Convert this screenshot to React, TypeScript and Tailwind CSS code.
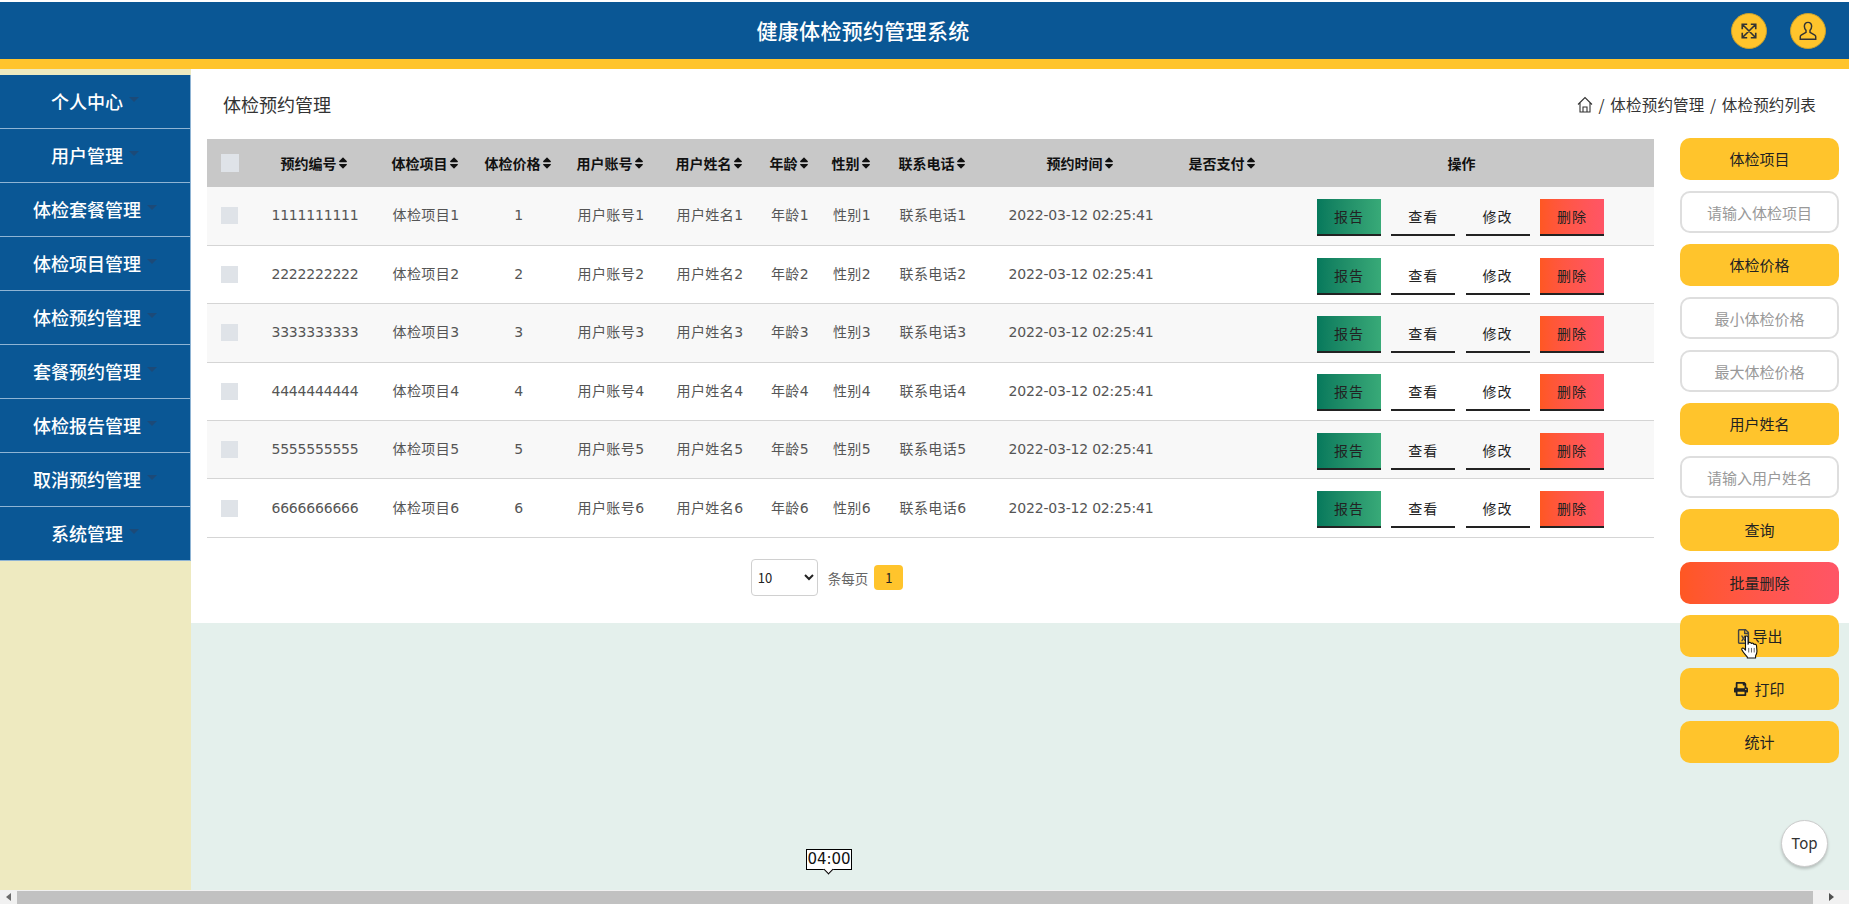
import { FaPrint, FaRegFileExcel, FaSort } from "react-icons/fa";

const menus = [
  "个人中心",
  "用户管理",
  "体检套餐管理",
  "体检项目管理",
  "体检预约管理",
  "套餐预约管理",
  "体检报告管理",
  "取消预约管理",
  "系统管理",
];

const columns = [
  { title: "预约编号", width: "w-[116px]" },
  { title: "体检项目", width: "w-[106px]" },
  { title: "体检价格", width: "w-[80px]" },
  { title: "用户账号", width: "w-[104px]" },
  { title: "用户姓名", width: "w-[94px]" },
  { title: "年龄", width: "w-[66px]" },
  { title: "性别", width: "w-[58px]" },
  { title: "联系电话", width: "w-[104px]" },
  { title: "预约时间", width: "w-[192px]" },
  { title: "是否支付", width: "w-[92px]" },
];

const rows = [1, 2, 3, 4, 5, 6];

const yellowBtn =
  "h-[42px] shrink-0 rounded-[10px] bg-[#ffc42c] flex items-center justify-center text-[15px] text-[#222]";
const fieldBtn =
  "h-[42px] shrink-0 w-full rounded-[10px] border-2 border-[#dedede] bg-white text-center text-[15px] text-[#333] placeholder:text-[#999] outline-none";

const ActionButtons = () => (
  <div className="flex gap-[10.3px] pl-[48px] pt-[3px] font-['Noto_Sans_CJK_SC',sans-serif] tracking-normal">
    <button className="w-[64px] h-[37px] bg-linear-to-r from-[#06795c] to-[#38aa78] border-b-2 border-[#222] text-[14px] tracking-[1px] text-[#222]">
      报告
    </button>
    <button className="w-[64px] h-[37px] border-b-2 border-[#222] text-[14px] tracking-[1px] text-[#222]">
      查看
    </button>
    <button className="w-[64px] h-[37px] border-b-2 border-[#222] text-[14px] tracking-[1px] text-[#222]">
      修改
    </button>
    <button className="w-[64px] h-[37px] bg-linear-to-r from-[#ff5722] to-[#ff5566] border-b-2 border-[#222] text-[14px] tracking-[1px] text-[#222]">
      删除
    </button>
  </div>
);

const Hand = () => (
  <svg width="22" height="26" viewBox="0 0 24 28" className="absolute left-[1549px] top-[565px]">
    <path
      d="M6 2.500c1-1 2.600-.6 2.800 1V11l.4-1.600c1.400-.9 2.800-.4 3 .8 1.300-.8 2.900-.3 3 1 1.300-.6 2.700 0 2.800 1.300l.5 6c0 2-.6 3.500-1.500 5v2.500H8V25c-1.500-2.300-4.500-4.800-6-8-.5-1.400.9-2.600 2.200-1.500L6 17.500z"
      fill="#fff"
      stroke="#111"
      strokeWidth="1.200"
      strokeLinejoin="round"
    />
    <path d="M9.500 15v5M12.500 15v5M15.500 15v5" stroke="#555" strokeWidth="1" />
  </svg>
);

const App = () => {
  return (
    <div className="w-[1849px] h-[904px] flex flex-col overflow-hidden bg-white font-['Noto_Sans_CJK_SC',sans-serif]">
      <header className="h-[67px] shrink-0 mt-[2px] bg-[#0a5795] border-b-[10px] border-[#ffc42c] flex items-center">
        <h1 className="flex-1 text-center pr-[5px] text-[21px] tracking-[0.3px] font-medium text-white">
          健康体检预约管理系统
        </h1>
        <div className="flex gap-[23px] pr-[23px]">
          <div className="size-[36px] rounded-full bg-[#ffc42c] border border-[#c9a02c] flex items-center justify-center">
            <svg width="18" height="18" viewBox="0 0 20 20" fill="none" stroke="#333" strokeWidth="1.800">
              <path d="M3 3l14 14M17 3L3 17M2.500 8V2.500H8M12 2.500h5.500V8M2.500 12v5.500H8M12 17.500h5.500V12" />
            </svg>
          </div>
          <div className="size-[36px] rounded-full bg-[#ffc42c] border border-[#c9a02c] flex items-center justify-center">
            <svg width="20" height="20" viewBox="0 0 20 22" fill="none" stroke="#333" strokeWidth="1.600">
              <path d="M10 1.500c-2.600 0-4 2-4 4.300 0 1.900.8 3.400 1.800 4.400v2.300L2.500 15.500c-.8.500-1 1-1 1.800V20h17v-2.700c0-.8-.2-1.300-1-1.800l-5.300-3v-2.300c1-1 1.800-2.500 1.800-4.400 0-2.300-1.400-4.300-4-4.300z" />
            </svg>
          </div>
        </div>
      </header>

      <div className="flex-1 flex min-h-0">
        <aside className="w-[191px] shrink-0 pt-[6px] bg-[#eeeac0]">
          <ul className="border-r border-[#8fb4d4]">
            {menus.map((name) => (
              <li
                key={name}
                className="h-[54px] bg-[#0a5795] border-b border-[#8fb4d4] flex items-center justify-center text-[18px] font-medium text-white"
              >
                <span>{name}</span>
                <span className="ml-[6px] mb-[4px] border-x-[5px] border-t-[5px] border-x-transparent border-t-[#1c4a78]" />
              </li>
            ))}
          </ul>
        </aside>

        <main className="flex-1 min-w-0 relative bg-[#e4f0ec]">
          <section className="h-[554px] bg-white pl-[16px] pr-[195px]">
            <div className="h-[70px] flex items-center pl-[16px]">
              <h2 className="text-[18px] text-[#333] font-normal">体检预约管理</h2>
            </div>
            <table className="w-[1447px] table-fixed border-collapse">
              <thead>
                <tr className="h-[48px] bg-[#c8c8c8]">
                  <th className="w-[50px] pl-[14px] text-left">
                    <div className="size-[18px] bg-[#dfe3e8]" />
                  </th>
                  {columns.map((col) => (
                    <th key={col.title} className={`${col.width} text-[14px] font-bold text-[#111]`}>
                      <span className="inline-flex items-center justify-center">
                        {col.title}
                        <FaSort size={14} className="-ml-[1px]" />
                      </span>
                    </th>
                  ))}
                  <th className="w-[385px] text-[14px] font-bold text-[#111]">操作</th>
                </tr>
              </thead>
              <tbody>
                {rows.map((n) => (
                  <tr
                    key={n}
                    className={`h-[58.4px] border-b border-[#d5d5d5] text-center text-[14px] tracking-[0.4px] text-[#555] font-['DejaVu_Sans','Noto_Sans_CJK_SC',sans-serif] ${
                      n % 2 === 1 ? "bg-[#f8f8f8]" : "bg-white"
                    }`}
                  >
                    <td className="pl-[14px]">
                      <div className="size-[17px] bg-[#dfe3e8]" />
                    </td>
                    <td className="tracking-[-0.2px]">{String(n).repeat(10)}</td>
                    <td>体检项目{n}</td>
                    <td>{n}</td>
                    <td>用户账号{n}</td>
                    <td>用户姓名{n}</td>
                    <td>年龄{n}</td>
                    <td>性别{n}</td>
                    <td>联系电话{n}</td>
                    <td className="tracking-[-0.2px]">2022-03-12 02:25:41</td>
                    <td></td>
                    <td>
                      <ActionButtons />
                    </td>
                  </tr>
                ))}
              </tbody>
            </table>
            <div className="w-[1447px] mt-[21px] flex items-start justify-center pr-[207px]">
              <select className="w-[67px] h-[37px] border border-[#d0d0d0] rounded-[4px] bg-white text-[13px] text-[#222] pl-[2px]">
                <option>10</option>
              </select>
              <span className="ml-[10px] mt-[9px] text-[13.500px] text-[#666]">条每页</span>
              <span className="ml-[6px] mt-[6px] w-[29px] h-[25px] rounded-[4px] bg-[#ffc42c] flex items-center justify-center text-[13px] text-[#222]">
                1
              </span>
            </div>
          </section>

          <nav className="absolute left-[1386px] top-[24px] flex items-center gap-[5.500px] text-[15.500px] tracking-[0.2px] text-[#333]">
            <svg width="16" height="17" viewBox="0 0 16 17" fill="none" stroke="#333" strokeWidth="1.100">
              <path d="M1 8.500L8 1.500l7 7M3 7v9h10V7M6 16v-5h4v5" />
            </svg>
            <span>/</span>
            <span>体检预约管理</span>
            <span>/</span>
            <span>体检预约列表</span>
          </nav>

          <div className="absolute left-[1489px] top-[69px] w-[159px] flex flex-col gap-[11px]">
            <div className={yellowBtn}>体检项目</div>
            <input className={fieldBtn} placeholder="请输入体检项目" />
            <div className={yellowBtn}>体检价格</div>
            <input className={fieldBtn} placeholder="最小体检价格" />
            <input className={fieldBtn} placeholder="最大体检价格" />
            <div className={yellowBtn}>用户姓名</div>
            <input className={fieldBtn} placeholder="请输入用户姓名" />
            <div className={yellowBtn}>查询</div>
            <div className="h-[42px] shrink-0 rounded-[10px] bg-linear-to-r from-[#ff5722] to-[#ff5566] flex items-center justify-center text-[15px] text-[#222]">
              批量删除
            </div>
            <div className={`${yellowBtn} gap-[1px]`}>
              <FaRegFileExcel size={15} className="text-[#444]" />
              导出
            </div>
            <div className={`${yellowBtn} gap-[6px]`}>
              <FaPrint size={14} />
              打印
            </div>
            <div className={yellowBtn}>统计</div>
          </div>

          <div className="absolute left-[615px] top-[780px] w-[46px] h-[21px] border border-black bg-white flex items-center justify-center text-[15px] leading-none text-[#111] font-['DejaVu_Sans',sans-serif]">
            04:00
            <span className="absolute left-[18px] top-[16px] size-[7px] rotate-45 border-r border-b border-black bg-white" />
          </div>

          <div className="absolute left-[1590px] top-[751px] size-[47px] rounded-full bg-white border border-[#ccc] shadow-[0_2px_3px_rgba(0,0,0,0.2)] flex items-center justify-center text-[15px] text-[#333]">
            Top
          </div>

          <Hand />
        </main>
      </div>

      <div className="h-[14px] shrink-0 bg-[#f1f1f1] flex items-center">
        <div className="w-[17px] flex justify-center">
          <span className="border-y-[4px] border-r-[5px] border-y-transparent border-r-[#6b6b6b]" />
        </div>
        <div className="w-[1796px] h-[13px] bg-[#c1c1c1]" />
        <div className="flex-1 flex justify-center">
          <span className="border-y-[4px] border-l-[5px] border-y-transparent border-l-[#505050]" />
        </div>
      </div>
    </div>
  );
};

export default App;
